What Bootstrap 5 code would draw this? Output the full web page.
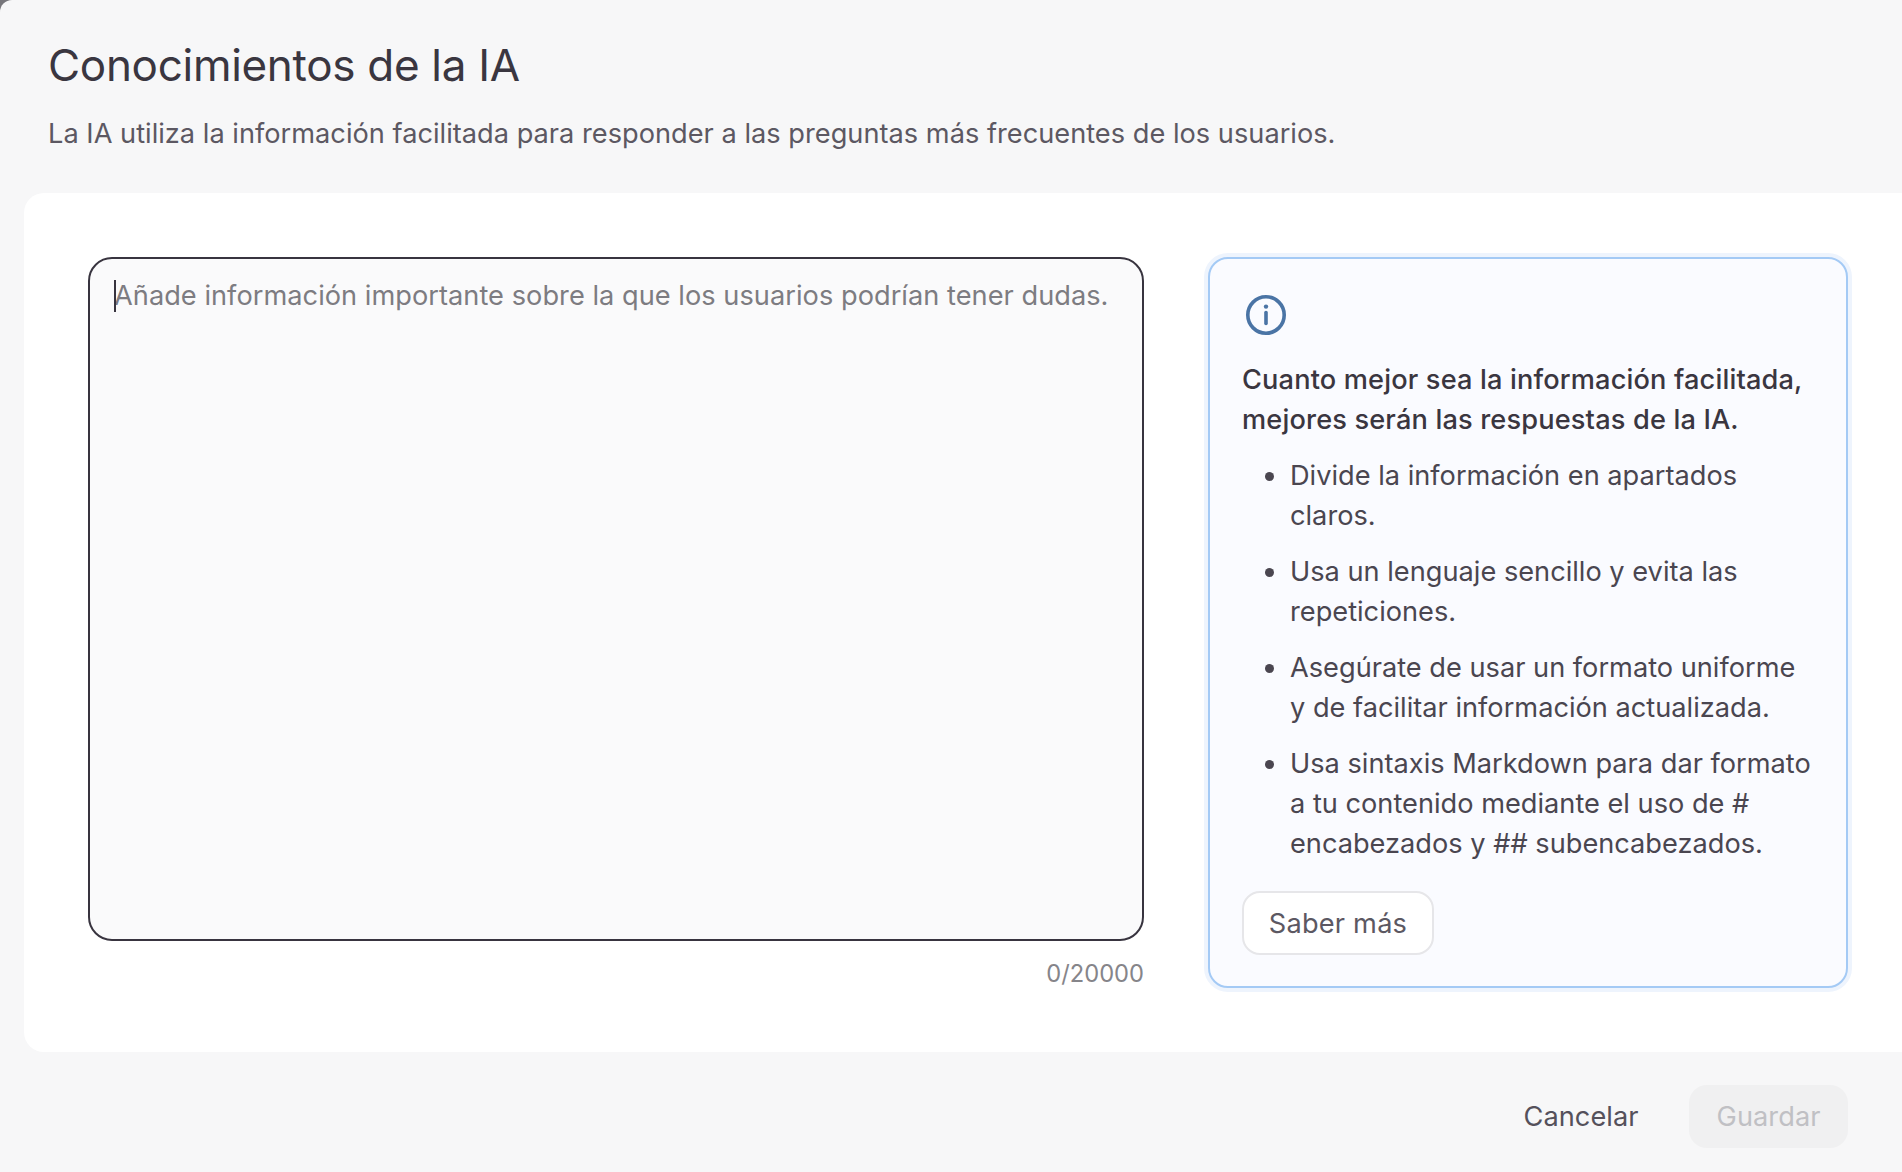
<!DOCTYPE html>
<html lang="es">
<head>
<meta charset="utf-8">
<title>Conocimientos de la IA</title>
<link href="https://cdn.jsdelivr.net/npm/bootstrap@5.3.0/dist/css/bootstrap.min.css" rel="stylesheet">
<style>
html,body{height:100%;}
body{background:#77767b;font-family:Inter,"Liberation Sans",sans-serif;color:#3a3640;overflow:hidden;font-size:27.2px;line-height:40px;}
.sheet{height:1172px;background:#f7f7f8;border-top-left-radius:12px;}
.head-area{padding:40px 48px 0;height:193px;}
.sheet-title{font-size:44px;line-height:50px;font-weight:400;color:#3a3640;margin:0 0 24px;letter-spacing:-.3px;}
.sheet-desc{margin:0;color:#5c5862;letter-spacing:.01px;}
.white-panel{margin-left:24px;height:859px;background:#fff;border-radius:20px 0 0 20px;padding:64px 54px 64px 64px;gap:64px;}
.editor-col{width:1056px;flex:none;}
.editor-box{height:684px;background:#fafafb;border:2px solid #38343f;border-radius:24px;padding:17px 24px;color:#7d7c81;white-space:nowrap;position:relative;letter-spacing:.03px;}
.caret-line{position:absolute;left:24px;top:21px;width:2px;height:32px;background:#38343f;}
.count-text{font-size:23.7px;line-height:32px;color:#86858a;text-align:right;margin-top:17px;}
.tip-card{width:640px;height:731px;flex:none;background:#fafbff;border:2px solid #a4caf5;border-radius:20px;padding:32px;box-shadow:0 0 0 4px #eef4fd;}
.tip-icon{display:block;width:48px;height:48px;margin-bottom:21px;}
.tip-lead{font-weight:500;color:#3a3640;margin:0 0 16px;letter-spacing:.15px;}
.tip-list{margin:0 0 27px;padding-left:48px;color:#4a4650;list-style:none;}
.tip-list li{margin-bottom:16px;position:relative;}
.tip-list li:last-child{margin-bottom:0;}
.tip-list li::before{content:"";position:absolute;left:-25px;top:16px;width:9px;height:9px;border-radius:50%;background:#4a4650;}
.more-btn{height:64px;width:192px;background:#fff;border:2px solid #e6e6e9;border-radius:18px;color:#5c5862;font-size:27.2px;line-height:40px;padding:1px 0 0;letter-spacing:.2px;}
.foot-area{height:120px;padding:33px 54px 0 0;gap:23px;}
.cancel-btn,.save-btn{height:63px;font-size:27.2px;line-height:40px;padding:1px 27.5px 0;border:0;border-radius:18px;color:#55515b;letter-spacing:.05px;}
.save-btn,.save-btn:disabled{background:#f0f0f1;color:#c0c0c4;opacity:1;}
</style>
</head>
<body>
<div class="sheet d-flex flex-column">
  <header class="head-area">
    <h1 class="sheet-title">Conocimientos de la IA</h1>
    <p class="sheet-desc">La IA utiliza la información facilitada para responder a las preguntas más frecuentes de los usuarios.</p>
  </header>
  <main class="white-panel d-flex">
    <div class="editor-col">
      <div class="editor-box" role="textbox"><span class="caret-line"></span>Añade información importante sobre la que los usuarios podrían tener dudas.</div>
      <div class="count-text">0/20000</div>
    </div>
    <aside class="tip-card">
      <svg class="tip-icon" viewBox="0 0 48 48" fill="none" aria-hidden="true">
        <circle cx="24" cy="24" r="18.2" stroke="#4a74a5" stroke-width="3.6"/>
        <circle cx="24" cy="15.6" r="2.2" fill="#4a74a5"/>
        <path d="M24 21.5V32.5" stroke="#4a74a5" stroke-width="3.6" stroke-linecap="round"/>
      </svg>
      <p class="tip-lead">Cuanto mejor sea la información facilitada, mejores serán las respuestas de la IA.</p>
      <ul class="tip-list">
        <li>Divide la información en apartados claros.</li>
        <li>Usa un lenguaje sencillo y evita las repeticiones.</li>
        <li>Asegúrate de usar un formato uniforme y de facilitar información actualizada.</li>
        <li>Usa sintaxis Markdown para dar formato a tu contenido mediante el uso de # encabezados y ## subencabezados.</li>
      </ul>
      <button type="button" class="btn more-btn">Saber más</button>
    </aside>
  </main>
  <footer class="foot-area d-flex justify-content-end align-items-start">
    <button type="button" class="btn cancel-btn">Cancelar</button>
    <button type="button" class="btn save-btn" disabled>Guardar</button>
  </footer>
</div>
<script src="https://cdn.jsdelivr.net/npm/bootstrap@5.3.0/dist/js/bootstrap.bundle.min.js"></script>
</body>
</html>
